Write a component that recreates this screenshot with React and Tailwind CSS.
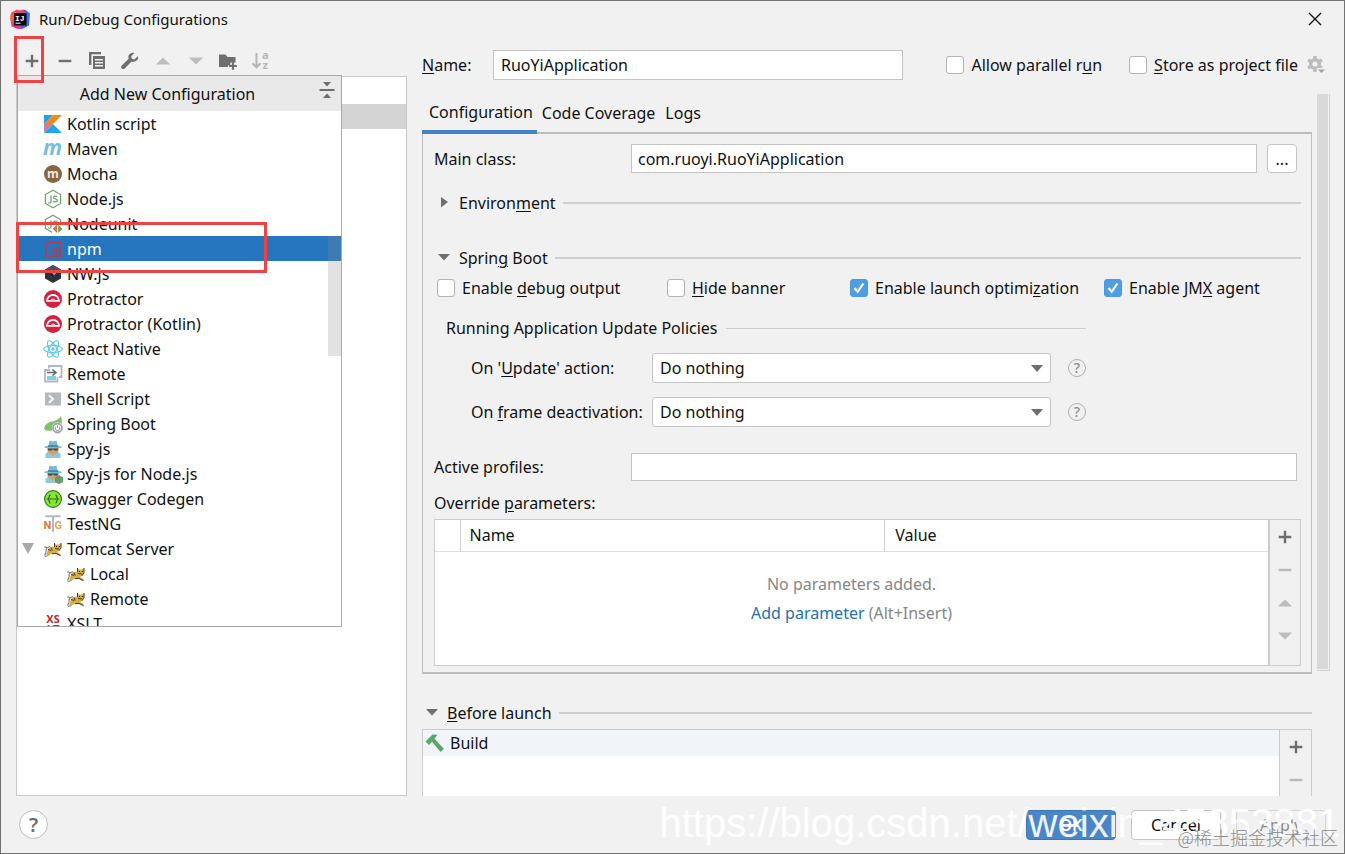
import React from 'react';

const Svg = ({ children, size = 20, box = 20 }) => (
  <svg width={size} height={size} viewBox={`0 0 ${box} ${box}`} fill="none" aria-hidden="true" className="shrink-0 overflow-visible">
    {children}
  </svg>
);

/* ---------- toolbar glyphs ---------- */
const Plus = () => (
  <Svg><path d="M10 3.7v12.6M3.7 10h12.6" stroke="#6e6e6e" strokeWidth="2.4" /></Svg>
);
const Minus = ({ dim }) => (
  <Svg><path d="M3.7 10h12.6" stroke={dim ? '#b9b9b9' : '#6e6e6e'} strokeWidth="2.4" /></Svg>
);
const Up = () => <Svg><path d="M10 6.5l7.2 7H2.8z" fill="#bdbdbd" /></Svg>;
const Down = () => <Svg><path d="M10 13.5l7.2-7H2.8z" fill="#bdbdbd" /></Svg>;
const Copy = () => (
  <Svg>
    <path d="M2 1h12v2.3H4.4V14H2z" fill="#6e6e6e" />
    <path fillRule="evenodd" d="M6 5h12v13H6zM8 8v1.4h8V8zM8 11v1.4h8V11zM8 14v1.4h8V14z" fill="#6e6e6e" />
  </Svg>
);
const Wrench = () => (
  <Svg>
    <path d="M17.8 5.2l-3.4 3.2-2.6-.6-.6-2.5 3.3-3.3c-2.300-.8-4.700.1-5.700 2.100-.6 1.200-.6 2.500-.1 3.700L1.800 14.600c-.8.8-.8 2 0 2.800.8.8 2.100.8 2.900 0l6.900-6.900c2.800 1 5.700-.4 6.500-2.900.2-.8.1-1.700-.3-2.400z" fill="#6e6e6e" />
  </Svg>
);
const FolderPlus = () => (
  <Svg>
    <path d="M1 3.500h6.500l2 2.500h8v5.500h-5.200v3H9.800V16H1z" fill="#6e6e6e" />
    <path d="M15 11.200v7.600M11.200 15h7.600" stroke="#6e6e6e" strokeWidth="2.200" />
  </Svg>
);
const Sort = () => (
  <Svg>
    <path d="M5.500 2v14M1.500 12.300l4 4 4-4" stroke="#b5b5b5" strokeWidth="2" />
    <text x="11" y="8" fontSize="11" fontWeight="700" fontFamily="Noto Sans, sans-serif" fill="#b5b5b5">a</text>
    <text x="11.500" y="18" fontSize="11" fontWeight="700" fontFamily="Noto Sans, sans-serif" fill="#b5b5b5">z</text>
  </Svg>
);
const Collapse = () => (
  <Svg>
    <path d="M2.500 10h15" stroke="#6e6e6e" strokeWidth="2" />
    <path d="M6 2h8l-4 4.500zM6 18h8l-4-4.500z" fill="#6e6e6e" />
  </Svg>
);
const Gear = () => (
  <Svg>
    <circle cx="9" cy="9" r="4.300" stroke="#bcbcbc" strokeWidth="3.400" />
    <path d="M9 1v3M9 14v3M2 5l2.700 1.500M13.300 11.500L16 13M2 13l2.700-1.500M13.300 6.500L16 5" stroke="#bcbcbc" strokeWidth="3.400" />
    <path d="M10.500 13h8.500v6h-5z" fill="#f1f1f1" />
    <path d="M12 14.500h7l-3.500 3.500z" fill="#a0a0a0" />
  </Svg>
);
const Hammer = () => (
  <Svg>
    <path d="M0.500 8.500L7.500 1.500l5 .2-3 4L18.800 15.800l-3.200 3.100L7 8.700 4 12z" fill="#59a869" />
  </Svg>
);
const AppLogo = () => (
  <Svg>
    <path d="M1 4l6-3.500 6 3-1 13-4 3-6.500-2z" fill="#f4454d" />
    <path d="M1 4l4-2.500 2 5-3 6-3 1.500-1-4z" fill="#fb5a50" />
    <path d="M10 3l5-2.500 5 4-1 12-7 3.500-7-2z" fill="#3f6fd8" />
    <path d="M9 1.500l5-1 1 4.500H7z" fill="#e0468a" />
    <path d="M1 13l3 2 7 1.500v3.500l-5-.5-4-3z" fill="#d13c9e" />
    <rect x="4" y="4" width="12.500" height="12.500" fill="#0b0710" />
    <text x="5" y="11.500" fontSize="8" fontWeight="700" fontFamily="Liberation Mono, monospace" fill="#fff">IJ</text>
    <path d="M5.500 14.200h5" stroke="#fff" strokeWidth="1" />
  </Svg>
);

/* ---------- configuration type icons ---------- */
const Kotlin = () => (
  <Svg>
    <defs>
      <linearGradient id="kt" x1="0" y1="20" x2="18" y2="0" gradientUnits="userSpaceOnUse">
        <stop offset="0.200" stopColor="#c776b8" /><stop offset="0.450" stopColor="#ef7f45" /><stop offset="0.700" stopColor="#f88909" />
      </linearGradient>
    </defs>
    <path d="M1 1h9L1 10.500z" fill="#1fa0ea" />
    <path d="M10 1h9L1 19V10.500z" fill="url(#kt)" />
    <path d="M1 19l9-9 9 9z" fill="#1fa5f2" />
  </Svg>
);
const Maven = () => (
  <Svg><text x="0" y="16" fontSize="21" fontWeight="700" fontStyle="italic" fontFamily="Open Sans, sans-serif" fill="#74bfe0">m</text></Svg>
);
const Mocha = () => (
  <Svg>
    <circle cx="10" cy="10" r="9" fill="#8a6343" />
    <text x="10" y="14" textAnchor="middle" fontSize="12" fontWeight="700" fontFamily="Open Sans, sans-serif" fill="#f4ece6">m</text>
  </Svg>
);
const NodeBase = () => (
  <>
    <path d="M10 1.200l7.600 4.400v8.800L10 18.800l-7.600-4.400V5.600z" stroke="#6fa072" strokeWidth="1.200" />
    <path d="M8 6.500v6c0 1.600-1.500 2-2.800 1.300M14.200 7.800c-.8-.8-3.700-1-3.700.6 0 2 3.900.8 3.900 3 0 1.700-3 1.700-4.200.6" stroke="#6fa072" strokeWidth="1.300" />
  </>
);
const NodeJs = () => <Svg><NodeBase /></Svg>;
const NodeUnit = () => (
  <Svg>
    <NodeBase />
    <path d="M9 10h11v10H9z" fill="#fff" />
    <path d="M14 10.500v8.500L9.800 14.800z" fill="#e8694a" />
    <path d="M15.200 10.500v8.500l4.200-4.200z" fill="#62a844" />
  </Svg>
);
const Npm = () => (
  <Svg><path d="M3 3h14v14h-3.500V8.500M3 3v14h7.500V8" stroke="#b13f52" strokeWidth="1.800" /></Svg>
);
const NwJs = () => (
  <Svg>
    <path d="M10 1l8 4.500v9L10 19l-8-4.500v-9z" fill="#2a2f3a" />
    <path d="M10 1l8 4.500L10 8 2 5.500z" fill="#4b525f" />
    <path d="M15 6.500l-3.800 5.100L5 13.500l3.800-4.700z" fill="#8ea2c8" />
    <path d="M5 13.500l6.200-1.900-2.400-2.800z" fill="#1a1d26" />
  </Svg>
);
const Protractor = () => (
  <Svg>
    <circle cx="10" cy="10" r="9" fill="#d3213f" />
    <path d="M4 11.800a6 6 0 0112 0z" stroke="#fff" strokeWidth="1.700" />
    <path d="M7.500 11.500a2.600 2.600 0 015 0z" fill="#f5bcc6" />
  </Svg>
);
const ReactNative = () => (
  <Svg>
    <g stroke="#5fc9ea" strokeWidth="1.200">
      <ellipse cx="10" cy="10" rx="9.300" ry="3.600" />
      <ellipse cx="10" cy="10" rx="9.300" ry="3.600" transform="rotate(60 10 10)" />
      <ellipse cx="10" cy="10" rx="9.300" ry="3.600" transform="rotate(120 10 10)" />
    </g>
    <circle cx="10" cy="10" r="1.800" fill="#5fc9ea" />
  </Svg>
);
const RemoteIcon = () => (
  <Svg>
    <path d="M6 4.500V2h12.500v11H16" stroke="#b1b8be" strokeWidth="1.800" />
    <path d="M7 6H2v11.500h12.500V13" stroke="#b1b8be" strokeWidth="1.800" />
    <path d="M4 12h9v4H4z" fill="#86cfe0" />
    <path d="M4 8.500h8M9.500 5.500l3.500 3-3.500 3" stroke="#5d6870" strokeWidth="1.600" />
  </Svg>
);
const Shell = () => (
  <Svg>
    <path d="M2 3.500h16v13H2z" fill="#b1b8be" />
    <path d="M6 6.300l4 3.700-4 3.700" stroke="#fff" strokeWidth="2" />
  </Svg>
);
const Spring = () => (
  <Svg>
    <path d="M18 2c1 3.500 1.400 8-.5 11-3 4.500-10 4-14 3.500-3-.500-3-4 0-6.500C7.500 6.500 14.500 8 18 2z" fill="#84c06c" />
    <circle cx="14.500" cy="14" r="5.700" fill="#fff" />
    <circle cx="14.500" cy="14" r="4.500" stroke="#9aa5ab" strokeWidth="1.800" />
    <path d="M12.900 12.800a2.200 2.200 0 103.200 0M14.500 11.300v2.600" stroke="#9aa5ab" strokeWidth="1.100" />
  </Svg>
);
const SpyBase = () => (
  <>
    <path d="M5.500 6.500L6.500 1.500l3.500 1 3.500-1 1 5 4 1.300v1.200h-17V7.800z" fill="#72bcd4" />
    <path d="M5 6.300h10v1.500H5z" fill="#3a7f9c" />
    <path d="M4.500 9h11v5L10 17.500 4.500 14z" fill="#c9a575" />
    <path d="M4.500 9.500h4.700v2H5.500zM10.800 9.500h4.700l-1 2h-3.700zM8 9.500h4v1H8z" fill="#3d4a52" />
    <path d="M2.500 14.500l2.500-1 5 4 5-4 2.500 1V19h-15z" fill="#86cbe0" />
  </>
);
const Spy = () => <Svg><SpyBase /></Svg>;
const SpyNode = () => (
  <Svg>
    <SpyBase />
    <path d="M16 11l4 2.300v4.700L16 20.300l-4-2.300v-4.700z" fill="#699a6a" />
  </Svg>
);
const Swagger = () => (
  <Svg>
    <circle cx="10" cy="10" r="8.400" fill="#85ea2d" stroke="#357a2c" strokeWidth="1.200" />
    <path d="M7.500 5.800c-2 0-1 2.600-1.600 3.500-.3.500-.9.700-.9.700s.6.200.9.700c.6.900-.4 3.500 1.600 3.500M12.500 5.800c2 0 1 2.600 1.600 3.500.3.500.9.700.9.700s-.6.200-.9.700c-.6.900.4 3.500-1.600 3.500" stroke="#2b5a22" strokeWidth="1.200" />
    <path d="M7.200 10h1.200M9.400 10h1.200M11.600 10h1.200" stroke="#2b5a22" strokeWidth="1.300" />
  </Svg>
);
const TestNg = () => (
  <Svg>
    <path d="M2.500 2.200h15M10 2.200V18" stroke="#b4b9bf" strokeWidth="2" />
    <text x="0.500" y="15" fontSize="11" fontWeight="700" fontFamily="Roboto, sans-serif" fill="#e3713c">N</text>
    <text x="11.500" y="15" fontSize="11" fontWeight="700" fontFamily="Roboto, sans-serif" fill="#e0a359">G</text>
  </Svg>
);
const Tomcat = () => (
  <Svg>
    <path d="M1.500 16.500c2.500-2 1-4.500 2-7 .5-1.500-1-2-2-1M4 9l3-1.500M5.500 16.500L2 17.500" stroke="#808080" strokeWidth="1.200" />
    <path d="M5 10c2-2 4-2.500 6-2l.3-4L13 5.500h3L18 4v4.500l-2 3.500-2 1 4 2.500-1 1.500-5-2.500-4 .500-3 2-1.500-1z" fill="#d4ad45" />
    <path d="M5 10.500l3 1M8 8.500l1 3M12 9.500l4 .5M11.500 4v4M18 4v4.500l-2 3.300M9 14.800l4-.5 4.500 2.400" stroke="#4b3d20" strokeWidth="1" />
    <path d="M13 7h1v1h-1zM15.800 7h1v1h-1z" fill="#201a10" />
  </Svg>
);
const Xslt = () => (
  <Svg>
    <text x="10" y="9" textAnchor="middle" fontSize="11" fontWeight="700" fontFamily="Open Sans, sans-serif" fill="#bf2434">XS</text>
    <text x="10" y="19" textAnchor="middle" fontSize="11" fontWeight="700" fontFamily="Open Sans, sans-serif" fill="#bf2434">LT</text>
  </Svg>
);

const TYPES = [
  ['Kotlin script', Kotlin], ['Maven', Maven], ['Mocha', Mocha], ['Node.js', NodeJs], ['Nodeunit', NodeUnit],
  ['npm', Npm], ['NW.js', NwJs], ['Protractor', Protractor], ['Protractor (Kotlin)', Protractor],
  ['React Native', ReactNative], ['Remote', RemoteIcon], ['Shell Script', Shell], ['Spring Boot', Spring],
  ['Spy-js', Spy], ['Spy-js for Node.js', SpyNode], ['Swagger Codegen', Swagger], ['TestNG', TestNg],
  ['Tomcat Server', Tomcat, 'group'], ['Local', Tomcat, 'child'], ['Remote', Tomcat, 'child'], ['XSLT', Xslt],
];

const K = ({ children }) => <span className="underline decoration-1 underline-offset-2">{children}</span>;

const IconButton = ({ label, children }) => (
  <button type="button" aria-label={label} className="flex h-[33px] w-8 shrink-0 items-center justify-center">
    {children}
  </button>
);

function Check({ id, checked, children }) {
  return (
    <div className="flex items-center gap-[7px]">
      <span className="relative flex h-[18px] w-[18px] shrink-0">
        <input
          id={id}
          type="checkbox"
          defaultChecked={checked}
          className="peer h-[18px] w-[18px] appearance-none rounded-[3px] border border-[#b4b4b4] bg-white checked:border-[#4a98de] checked:bg-[#4f9ee3]"
        />
        <svg viewBox="0 0 18 18" className="pointer-events-none absolute inset-0 hidden peer-checked:block" fill="none" aria-hidden="true">
          <path d="M4.500 9l3.200 3.800L13.300 4.500" stroke="#fff" strokeWidth="2.200" />
        </svg>
      </span>
      <label htmlFor={id} className="whitespace-nowrap">{children}</label>
    </div>
  );
}

function Section({ open, children }) {
  return (
    <div className="flex h-[30px] items-center">
      <button type="button" className="flex items-center gap-[5px] whitespace-nowrap">
        <svg width="12" height="12" viewBox="0 0 12 12" aria-hidden="true" className="mx-1">
          {open ? <path d="M0 2h12L6 8.500z" fill="#6e6e6e" /> : <path d="M3 0l7 5L3 10.500z" fill="#6e6e6e" />}
        </svg>
        <span>{children}</span>
      </button>
      <div className="ml-[7px] h-[2px] flex-1 bg-[#cecece]" />
    </div>
  );
}

function Policy({ id, label }) {
  return (
    <div className="flex h-[30px] items-center">
      <label htmlFor={id} className="w-[181px] shrink-0 whitespace-nowrap">{label}</label>
      <div className="relative flex-1">
        <select id={id} className="h-[30px] w-full appearance-none rounded-[3px] border border-[#c4c4c4] bg-white px-[7px]">
          <option>Do nothing</option>
        </select>
        <svg width="12" height="7" viewBox="0 0 12 7" className="pointer-events-none absolute right-2 top-3" aria-hidden="true">
          <path d="M0 0h12L6 7z" fill="#6e6e6e" />
        </svg>
      </div>
      <button type="button" aria-label="Help" className="ml-[17px] flex h-[18px] w-[18px] items-center justify-center rounded-full border border-[#b0b0b0] text-[14px] font-medium leading-none text-[#8c8c8c]">
        ?
      </button>
    </div>
  );
}

function AddPopup() {
  return (
    <div className="absolute left-px top-[39px] flex h-[552px] w-[325px] flex-col overflow-hidden border border-[#a9a9a9] bg-white">
      <div className="flex h-[35px] shrink-0 items-center bg-[#e9e9e9]">
        <h2 className="flex-1 text-center">Add New Configuration</h2>
        <button type="button" aria-label="Collapse" className="mb-2 mr-1 flex h-5 w-5">
          <Collapse />
        </button>
      </div>
      <ul>
        {TYPES.map(([name, Icon, kind], i) => (
          <li key={i}>
            <button
              type="button"
              className={`flex h-[25px] w-full items-center whitespace-nowrap ${name === 'npm' ? 'bg-[#2675bf] text-white' : ''}`}
            >
              <span className={kind === 'child' ? 'w-12 shrink-0' : 'w-[25px] shrink-0 pl-1'}>
                {kind === 'group' && (
                  <svg width="12" height="11" viewBox="0 0 12 11" aria-hidden="true"><path d="M0 0h12L6 11z" fill="#a8a8a8" /></svg>
                )}
              </span>
              <Icon />
              <span className="ml-1">{name}</span>
            </button>
          </li>
        ))}
      </ul>
      <div className="absolute right-0 top-40 h-[120px] w-[13px] bg-[#8c8c8c]/25" />
    </div>
  );
}

export default function App() {
  return (
    <div className="relative flex min-h-screen flex-col overflow-hidden border border-[#727272] bg-[#f1f1f1] font-['Noto_Sans','Noto_Sans_CJK_SC',sans-serif] text-[16px] leading-6 text-[#111]">
      <header className="flex h-[35px] shrink-0 items-center pl-[9px] pr-[22px]">
        <AppLogo />
        <h1 className="ml-[9px] flex-1 text-[15px]">Run/Debug Configurations</h1>
        <button type="button" aria-label="Close">
          <svg width="14" height="14" viewBox="0 0 14 14" aria-hidden="true">
            <path d="M1 1l12 12M13 1L1 13" stroke="#111" strokeWidth="1.400" />
          </svg>
        </button>
      </header>

      <main className="flex flex-1 gap-[15px] pl-[15px] pr-[14px]">
        <aside className="relative flex w-[391px] shrink-0 flex-col">
          <div className="mt-[10px] flex h-[30px] w-[261px] items-center justify-between">
            <IconButton label="Add"><Plus /></IconButton>
            <IconButton label="Remove"><Minus /></IconButton>
            <IconButton label="Copy"><Copy /></IconButton>
            <IconButton label="Edit templates"><Wrench /></IconButton>
            <IconButton label="Move up"><Up /></IconButton>
            <IconButton label="Move down"><Down /></IconButton>
            <IconButton label="New folder"><FolderPlus /></IconButton>
            <IconButton label="Sort"><Sort /></IconButton>
          </div>
          <div className="flex-1 border border-[#c8c8c8] bg-white pt-[27px]">
            <div className="h-[25px] bg-[#d4d4d4]" />
          </div>
          <AddPopup />
        </aside>

        <section className="flex min-w-0 flex-1 flex-col">
          <div className="flex h-[58px] items-center">
            <label htmlFor="name" className="w-[71px] shrink-0"><K>N</K>ame:</label>
            <input id="name" defaultValue="RuoYiApplication" className="h-[30px] min-w-0 flex-1 border border-[#c4c4c4] bg-white px-[7px]" />
            <div className="ml-[43px] flex items-center gap-[27px]">
              <Check id="parallel">Allow parallel r<K>u</K>n</Check>
              <Check id="store"><K>S</K>tore as project file</Check>
            </div>
            <button type="button" aria-label="Storage options" className="ml-2 mr-1"><Gear /></button>
          </div>

          <div className="flex">
            <div className="min-w-0 flex-1">
              <div role="tablist" className="flex h-10 items-stretch border-b-2 border-[#bdbdbd]">
                <button type="button" role="tab" aria-selected="true" className="-mb-[2px] border-b-4 border-[#4680ca] pl-[7px] pr-1">Configuration</button>
                <button type="button" role="tab" className="px-[5px]">Code Coverage</button>
                <button type="button" role="tab" className="px-[5px]">Logs</button>
              </div>

              <div className="border-x border-b-2 border-[#bdbdbd] pb-[6px] pl-[11px] pr-[10px] pt-[10px]">
                <div className="mr-1 flex h-[29px] items-center">
                  <label htmlFor="main" className="w-[197px] shrink-0">Main class:</label>
                  <input id="main" defaultValue="com.ruoyi.RuoYiApplication" className="h-[29px] min-w-0 flex-1 border border-[#c4c4c4] bg-white px-[6px]" />
                  <button type="button" aria-label="Browse" className="ml-[10px] h-[29px] w-[30px] rounded border border-[#c4c4c4] bg-white">...</button>
                </div>

                <div className="mt-[15px]"><Section>Environ<K>m</K>ent</Section></div>
                <div className="mt-[25px]"><Section open>Sprin<K>g</K> Boot</Section></div>

                <div className="ml-[3px] grid h-[30px] grid-cols-[230px_183px_254px_auto] items-center">
                  <Check id="debug">Enable <K>d</K>ebug output</Check>
                  <Check id="banner"><K>H</K>ide banner</Check>
                  <Check id="launch" checked>Enable launch optimi<K>z</K>ation</Check>
                  <Check id="jmx" checked>Enable JM<K>X</K> agent</Check>
                </div>

                <div className="ml-3 mt-[10px] max-w-[640px]">
                  <div className="flex h-[30px] items-center">
                    <h3 className="whitespace-nowrap">Running Application Update Policies</h3>
                    <div className="ml-2 h-px flex-1 bg-[#cecece]" />
                  </div>
                  <div className="ml-[25px] mt-[10px] flex flex-col gap-[14px]">
                    <Policy id="update" label={<>On '<K>U</K>pdate' action:</>} />
                    <Policy id="frame" label={<>On <K>f</K>rame deactivation:</>} />
                  </div>
                </div>

                <div className="mr-1 mt-[26px] flex h-[28px] items-center">
                  <label htmlFor="profiles" className="w-[197px] shrink-0">Active profiles:</label>
                  <input id="profiles" className="h-[28px] min-w-0 flex-1 border border-[#c4c4c4] bg-white px-[6px]" />
                </div>

                <h3 className="mb-1 mt-[10px]">Override <K>p</K>arameters:</h3>
                <div className="flex h-[147px] border border-[#cbcbcb]">
                  <div className="flex min-w-0 flex-1 flex-col bg-white">
                    <table className="w-full table-fixed text-left">
                      <colgroup><col className="w-[25px]" /><col className="w-[51%]" /><col /></colgroup>
                      <thead>
                        <tr className="h-[31px] border-b border-[#dedede]">
                          <th aria-label="Override" className="border-r border-[#cecece]" />
                          <th className="border-r border-[#cecece] pl-[9px] font-normal">Name</th>
                          <th className="pl-[10px] font-normal">Value</th>
                        </tr>
                      </thead>
                      <tbody>
                        <tr>
                          <td colSpan={3} className="pt-[18px] text-center leading-[29px] text-[#868686]">
                            <p>No parameters added.</p>
                            <p><a href="#add" className="text-[#2470b3]">Add parameter</a> (Alt+Insert)</p>
                          </td>
                        </tr>
                      </tbody>
                    </table>
                  </div>
                  <div className="flex w-8 flex-col items-center border-l-2 border-[#cbcbcb]">
                    <IconButton label="Add parameter"><Plus /></IconButton>
                    <IconButton label="Remove parameter"><Minus dim /></IconButton>
                    <IconButton label="Move parameter up"><Up /></IconButton>
                    <IconButton label="Move parameter down"><Down /></IconButton>
                  </div>
                </div>
              </div>
            </div>
            <div className="ml-[5px] h-[577px] w-[13px] border-b border-r border-[#d2d2d2] pr-px">
              <div className="h-[575px] bg-[#d9d9d9]" />
            </div>
          </div>

          <div className="mr-[18px] mt-6 flex flex-1 flex-col">
            <Section open><K>B</K>efore launch</Section>
            <div className="mt-px flex flex-1 border-x border-t border-[#cbcbcb]">
              <div className="min-w-0 flex-1 bg-white">
                <div className="flex h-[26px] items-center bg-[#f1f5f9] pl-[2px]">
                  <Hammer />
                  <span className="ml-[5px]">Build</span>
                </div>
              </div>
              <div className="flex w-8 flex-col items-center border-l border-[#cbcbcb]">
                <IconButton label="Add task"><Plus /></IconButton>
                <IconButton label="Remove task"><Minus dim /></IconButton>
              </div>
            </div>
          </div>
        </section>
      </main>

      <footer className="flex h-[57px] shrink-0 items-center gap-[15px] pl-[18px] pr-[18px]">
        <button type="button" aria-label="Help" className="mr-auto h-[29px] w-[29px] rounded-full border border-[#bdbdbd] bg-white text-[20px] font-semibold leading-[26px] text-[#6e6e6e]">?</button>
        <button type="button" className="h-[30px] w-[90px] rounded border border-[#3d76b5] bg-[#4a86c7] font-semibold text-white">OK</button>
        <button type="button" className="h-[30px] w-[90px] rounded border border-[#c4c4c4] bg-white">Cancel</button>
        <button type="button" disabled className="h-[30px] w-[90px] rounded border border-[#d4d4d4] text-[#8c8c8c]">Apply</button>
      </footer>

      <div className="pointer-events-none absolute left-[13px] top-[35px] h-[47px] w-[30px] border-[3px] border-[#ee4343]" />
      <div className="pointer-events-none absolute left-[15px] top-[221px] h-[51px] w-[251px] border-[3px] border-[#ee4343]" />
      <p className="pointer-events-none absolute bottom-[5px] right-1 whitespace-nowrap font-['Liberation_Sans',sans-serif] text-[40px] leading-[50px] text-white/90">https://blog.csdn.net/weixin_45853881</p>
      <p className="pointer-events-none absolute bottom-1 right-[6px] whitespace-nowrap font-['Noto_Sans_CJK_SC',sans-serif] text-[18px] font-light leading-6 text-[#8a8a8a]">@稀土掘金技术社区</p>
    </div>
  );
}
